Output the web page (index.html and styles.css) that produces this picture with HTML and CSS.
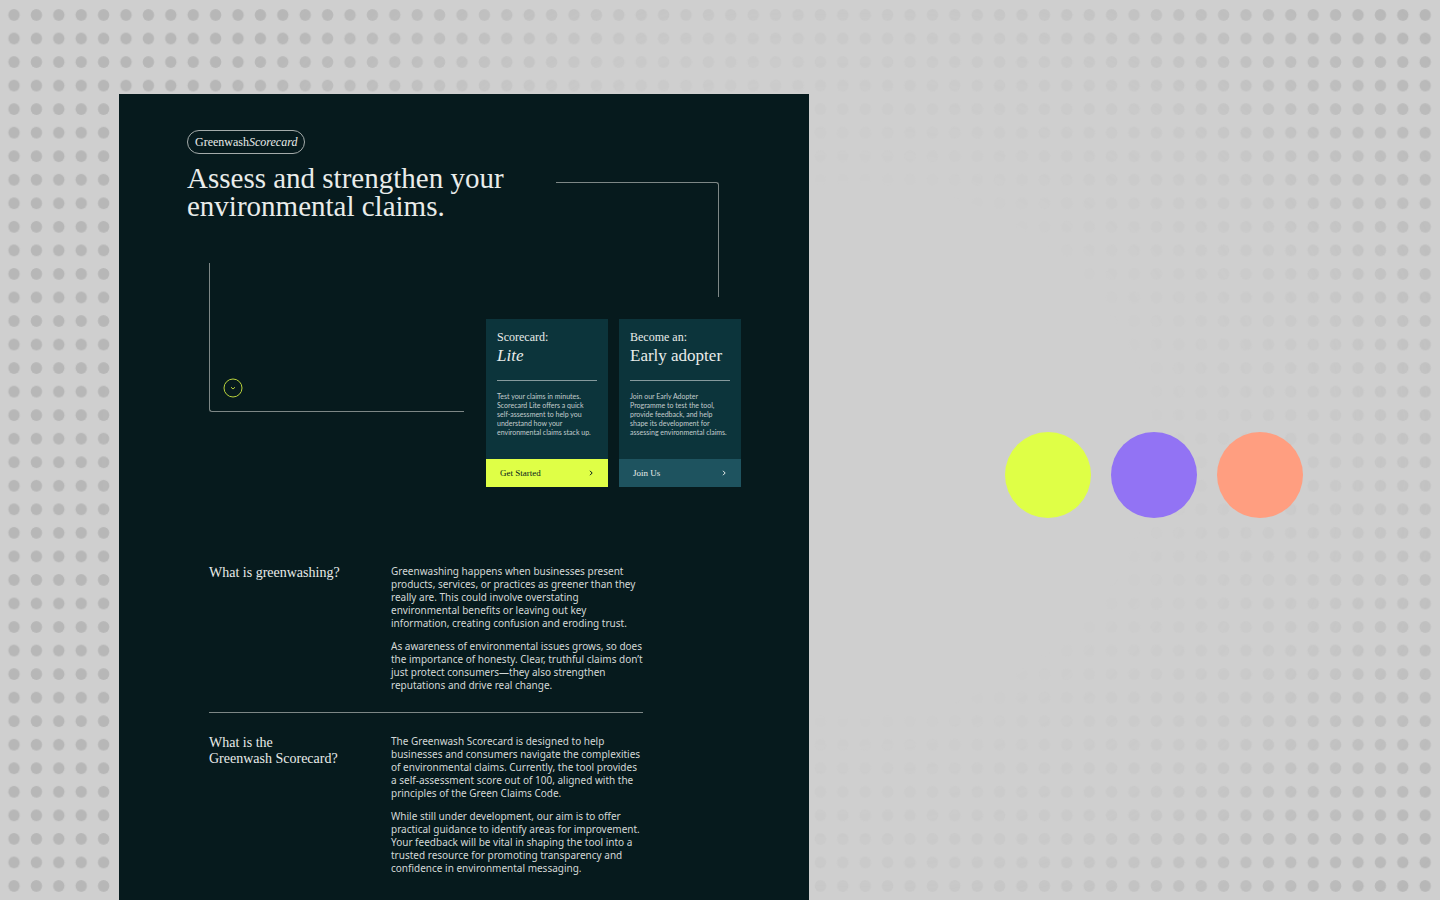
FILE: index.html
```html
<!DOCTYPE html>
<html lang="en">
<head>
    <meta charset="UTF-8">
    <meta name="viewport" content="width=device-width, initial-scale=1.0">
    <title>Greenwash Scorecard</title>
    <link rel="stylesheet" href="styles.css">
</head>
<body>
    <svg class="dots" aria-hidden="true">
        <defs>
            <pattern id="dot" x="2.8" y="3.2" width="22.4" height="23.54" patternUnits="userSpaceOnUse">
                <ellipse cx="11.2" cy="11.77" rx="5.7" ry="6"/>
            </pattern>
        </defs>
        <rect width="100%" height="100%" fill="url(#dot)"/>
    </svg>

    <div class="stage">
        <main class="panel">
            <section class="hero">
                <div class="intro">
                    <a class="logo" href="#">Greenwash<em>Scorecard</em></a>
                    <h1>Assess and strengthen your<br>environmental claims.</h1>
                    <div class="frame frame-bottom">
                        <a class="scroll-btn" href="#about" aria-label="Scroll down">
                            <svg viewBox="0 0 20 20"><circle cx="10" cy="10" r="9"/><path d="M8 9.2l2 1.8 2-1.8"/></svg>
                        </a>
                    </div>
                </div>
                <div class="offers">
                    <div class="frame frame-top"></div>
                    <div class="cards">
                        <article class="card">
                            <div class="card-body">
                                <h2>Scorecard: <em>Lite</em></h2>
                                <p>Test your claims in minutes.<br>Scorecard Lite offers a quick<br>self-assessment to help you<br>understand how your<br>environmental claims stack up.</p>
                            </div>
                            <button type="button" class="card-btn start-btn">Get Started
                                <svg viewBox="0 0 6 8"><path d="M2 1.8l2.2 2.2L2 6.2"/></svg>
                            </button>
                        </article>
                        <article class="card">
                            <div class="card-body">
                                <h2>Become an: <span>Early adopter</span></h2>
                                <p>Join our Early Adopter<br>Programme to test the tool,<br>provide feedback, and help<br>shape its development for<br>assessing environmental claims.</p>
                            </div>
                            <button type="button" class="card-btn join-btn">Join Us
                                <svg viewBox="0 0 6 8"><path d="M2 1.8l2.2 2.2L2 6.2"/></svg>
                            </button>
                        </article>
                    </div>
                </div>
            </section>

            <section class="about" id="about">
                <div class="topic">
                    <h3>What is greenwashing?</h3>
                    <div class="copy">
                        <p>Greenwashing happens when businesses present<br>products, services, or practices as greener than they<br>really are. This could involve overstating<br>environmental benefits or leaving out key<br>information, creating confusion and eroding trust.</p>
                        <p>As awareness of environmental issues grows, so does<br>the importance of honesty. Clear, truthful claims don’t<br>just protect consumers—they also strengthen<br>reputations and drive real change.</p>
                    </div>
                </div>
                <div class="topic">
                    <h3>What is the<br>Greenwash Scorecard?</h3>
                    <div class="copy">
                        <p>The Greenwash Scorecard is designed to help<br>businesses and consumers navigate the complexities<br>of environmental claims. Currently, the tool provides<br>a self-assessment score out of 100, aligned with the<br>principles of the Green Claims Code.</p>
                        <p>While still under development, our aim is to offer<br>practical guidance to identify areas for improvement.<br>Your feedback will be vital in shaping the tool into a<br>trusted resource for promoting transparency and<br>confidence in environmental messaging.</p>
                    </div>
                </div>
            </section>
        </main>

        <aside class="palette">
            <span class="swatch lime"></span>
            <span class="swatch violet"></span>
            <span class="swatch coral"></span>
        </aside>
    </div>
</body>
</html>
```
FILE: styles.css
```css
* {
    box-sizing: border-box;
}
body {
    margin: 0;
    background-color: #cfcfcf;
    color: #e9ecea;
    font-family: "Noto Sans", sans-serif;
}
h1, h2, h3, p {
    margin: 0;
    font-weight: normal;
}
h1, h2, h3, .logo, .card-btn {
    font-family: "Liberation Serif", serif;
}

/* Dotted backdrop, fading out towards the middle */
.dots {
    position: absolute;
    top: 0;
    left: 0;
    width: 100%;
    height: 100%;
    fill: #b7b7b7;
    -webkit-mask-image: radial-gradient(ellipse 750px 662px at 59% 50%, transparent 40%, rgba(0, 0, 0, 0.22) 65%, rgba(0, 0, 0, 0.6) 80%, #000 100%);
    mask-image: radial-gradient(ellipse 750px 662px at 59% 50%, transparent 40%, rgba(0, 0, 0, 0.22) 65%, rgba(0, 0, 0, 0.6) 80%, #000 100%);
}

.stage {
    position: relative;
    display: grid;
    grid-template-columns: minmax(0, 119fr) minmax(0, 690fr) minmax(0, 631fr);
    min-height: 100vh;
    padding-top: 94px;
}
.panel {
    grid-column: 2;
    background-color: #061a1d;
    padding: 36px 68px 26px;
}

/* Hero */
.hero {
    display: grid;
    grid-template-columns: minmax(0, 277fr) minmax(0, 255fr);
    gap: 22px;
}
.intro {
    display: flex;
    flex-direction: column;
    align-items: flex-start;
}
.logo {
    padding: 0 7px;
    border: 1px solid #a4abaa;
    border-radius: 12px;
    color: inherit;
    font-size: 12px;
    line-height: 22px;
    text-decoration: none;
    white-space: nowrap;
}
h1 {
    margin-top: 10px;
    font-size: 29px;
    line-height: 28px;
    white-space: nowrap;
}
.frame {
    border: 0 solid #7d8786;
}
.frame-bottom {
    display: flex;
    align-items: flex-end;
    align-self: stretch;
    height: 149px;
    margin: 43px 0 0 22px;
    padding: 0 0 13px 13px;
    border-width: 0 0 1px 1px;
    border-bottom-left-radius: 3px;
}
.frame-top {
    height: 115px;
    margin: 52px 22px 0 70px;
    border-width: 1px 1px 0 0;
    border-top-right-radius: 3px;
}
.scroll-btn svg {
    display: block;
    width: 20px;
    height: 20px;
    fill: none;
    stroke: #b9d23c;
}

/* Cards */
.cards {
    display: grid;
    grid-template-columns: repeat(2, minmax(0, 1fr));
    gap: 11px;
    margin-top: 22px;
}
.card {
    background-color: #0c343b;
}
.card-body {
    height: 140px;
    padding: 11px;
}
.card h2 {
    padding-bottom: 12px;
    border-bottom: 1px solid #869a9d;
    font-size: 12px;
    line-height: 14px;
}
.card h2 em, .card h2 span {
    display: block;
    font-size: 17px;
    line-height: 24px;
    white-space: nowrap;
}
.card p {
    margin-top: 11px;
    color: #c3cdce;
    font-family: Lato, sans-serif;
    font-size: 7px;
    line-height: 9px;
    white-space: nowrap;
}
.card-btn {
    display: flex;
    align-items: center;
    justify-content: space-between;
    width: 100%;
    height: 28px;
    padding: 0 14px;
    border: 0;
    font-size: 9px;
    cursor: pointer;
}
.card-btn svg {
    width: 6px;
    height: 8px;
    fill: none;
    stroke: currentColor;
}
.start-btn {
    background-color: #dfff46;
    color: #061a1d;
}
.join-btn {
    background-color: #1e535f;
    color: #e9ecea;
}

/* Questions */
.about {
    margin: 78px 98px 0 22px;
}
.topic {
    display: grid;
    grid-template-columns: minmax(0, 182fr) minmax(0, 252fr);
}
.topic + .topic {
    margin-top: 20px;
    padding-top: 22px;
    border-top: 1px solid #7d8786;
}
.topic h3 {
    font-size: 14px;
    line-height: 16px;
}
.copy {
    color: #d3d8d7;
    font-size: 10px;
    line-height: 13px;
    white-space: nowrap;
}
.copy p + p {
    margin-top: 10px;
}

/* Colour palette */
.palette {
    display: flex;
    justify-content: center;
    gap: 20px;
    margin-top: 338px;
    padding-left: 59px;
}
.swatch {
    width: 86px;
    height: 86px;
    border-radius: 50%;
}
.lime {
    background-color: #dfff46;
}
.violet {
    background-color: #9273f4;
}
.coral {
    background-color: #ff9e80;
}
```
